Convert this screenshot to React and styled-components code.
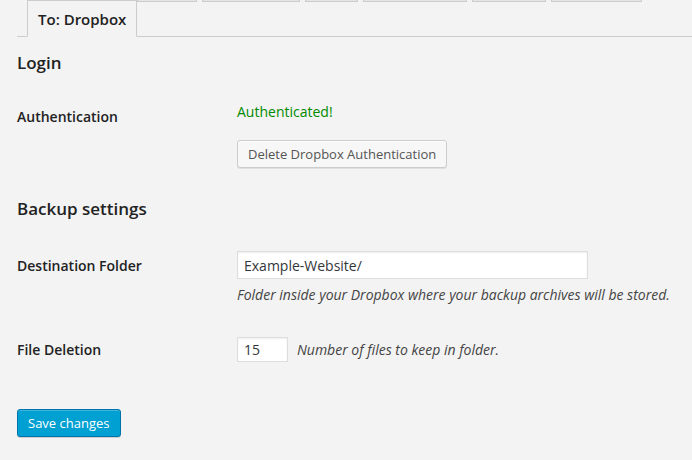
import React from 'react';
import styled, { createGlobalStyle } from 'styled-components';

const GlobalStyle = createGlobalStyle`
  html, body {
    margin: 0;
    padding: 0;
    background: #f3f3f3;
    overflow: hidden;
  }
  body {
    font-family: "Open Sans", "Liberation Sans", sans-serif;
    font-size: 13px;
    color: #222;
  }
`;

const Page = styled.div`
  display: flex;
  flex-direction: column;
  width: 692px;
  height: 460px;
  padding-left: 17px;
  box-sizing: border-box;
  overflow: hidden;
`;

const TabWrap = styled.div`
  display: flex;
  flex-direction: column;
  flex-shrink: 0;
  border-bottom: 1px solid #ccc;
  height: 36px;
`;

const UpperRow = styled.div`
  display: flex;
  flex-shrink: 0;
  height: 38px;
  margin-top: -36px;
  padding-left: 120px;
`;

const GhostTab = styled.div`
  width: ${(p) => p.w}px;
  margin-right: 5px;
  box-sizing: border-box;
  background: #e4e4e4;
  border: 1px solid #ccc;
`;

const LowerRow = styled.div`
  display: flex;
  flex-shrink: 0;
  margin-top: -2px;
  padding-left: 10px;
`;

const Tab = styled.div`
  height: 37px;
  box-sizing: border-box;
  padding: 0 10px;
  border: 1px solid #ccc;
  border-bottom-color: #f3f3f3;
  background: #f3f3f3;
  font-size: 15px;
  font-weight: 600;
  line-height: 36px;
  color: #222;
`;

const Heading = styled.h3`
  margin: ${(p) => p.top}px 0 0;
  font-size: 17px;
  font-weight: 600;
  line-height: 24px;
  color: #222;
`;

const Row = styled.div`
  display: grid;
  grid-template-columns: 220px 1fr;
  padding: ${(p) => p.pad};
`;

const Label = styled.div`
  font-size: 14px;
  font-weight: 600;
  line-height: 18px;
  padding-top: ${(p) => p.top}px;
  color: #222;
`;

const Field = styled.div`
  display: flex;
  flex-direction: column;
  align-items: flex-start;
  padding-top: ${(p) => p.top || 0}px;
`;

const Inline = styled.div`
  display: flex;
  align-items: center;
  gap: 9px;
`;

const Status = styled.div`
  color: #008a00;
  font-size: 14px;
  line-height: 18px;
  margin-bottom: 19px;
`;

const Button = styled.button`
  height: 28px;
  padding: 0 10px 1px;
  font-family: inherit;
  font-size: 13px;
  line-height: 26px;
  color: #555;
  background: #f7f7f7;
  border: 1px solid #ccc;
  border-radius: 3px;
  box-shadow: inset 0 1px 0 #fff, 0 1px 0 rgba(0, 0, 0, 0.08);
  cursor: pointer;
`;

const PrimaryButton = styled(Button)`
  padding: 0 11px 1px 10px;
  color: #fff;
  background: #00a0d2;
  border-color: #0073aa;
  box-shadow: inset 0 1px 0 rgba(120, 200, 230, 0.5), 0 1px 0 rgba(0, 0, 0, 0.15);
`;

const Input = styled.input`
  width: ${(p) => p.w}px;
  height: ${(p) => p.h}px;
  box-sizing: border-box;
  padding: 0 6px;
  font-family: inherit;
  font-size: 14px;
  color: #32373c;
  background: #fff;
  border: 1px solid #ddd;
  box-shadow: inset 0 1px 2px rgba(0, 0, 0, 0.07);
  outline: none;
`;

const Description = styled.span`
  font-size: 14px;
  font-style: italic;
  line-height: 18px;
  color: #444;
  margin-top: ${(p) => p.top || 0}px;
`;

const Footer = styled.div`
  padding-top: 47px;
`;

export default function App() {
  return (
    <>
      <GlobalStyle />
      <Page>
        <TabWrap>
          <UpperRow>
            <GhostTab w={60} />
            <GhostTab w={98} />
            <GhostTab w={53} />
            <GhostTab w={104} />
            <GhostTab w={74} />
            <GhostTab w={91} />
          </UpperRow>
          <LowerRow>
            <Tab>To: Dropbox</Tab>
          </LowerRow>
        </TabWrap>

        <Heading top={14}>Login</Heading>

        <Row pad="13px 0 15px">
          <Label top={20}>Authentication</Label>
          <Field top={15}>
            <Status>Authenticated!</Status>
            <Button>Delete Dropbox Authentication</Button>
          </Field>
        </Row>

        <Heading top={14}>Backup settings</Heading>

        <Row pad="30px 0 0">
          <Label top={6}>Destination Folder</Label>
          <Field>
            <Input w={351} h={28} defaultValue="Example-Website/" />
            <Description top={7}>
              Folder inside your Dropbox where your backup archives will be stored.
            </Description>
          </Field>
        </Row>

        <Row pad="33px 0 0">
          <Label top={4}>File Deletion</Label>
          <Inline>
            <Input w={51} h={25} defaultValue="15" />
            <Description>Number of files to keep in folder.</Description>
          </Inline>
        </Row>

        <Footer>
          <PrimaryButton>Save changes</PrimaryButton>
        </Footer>
      </Page>
    </>
  );
}
